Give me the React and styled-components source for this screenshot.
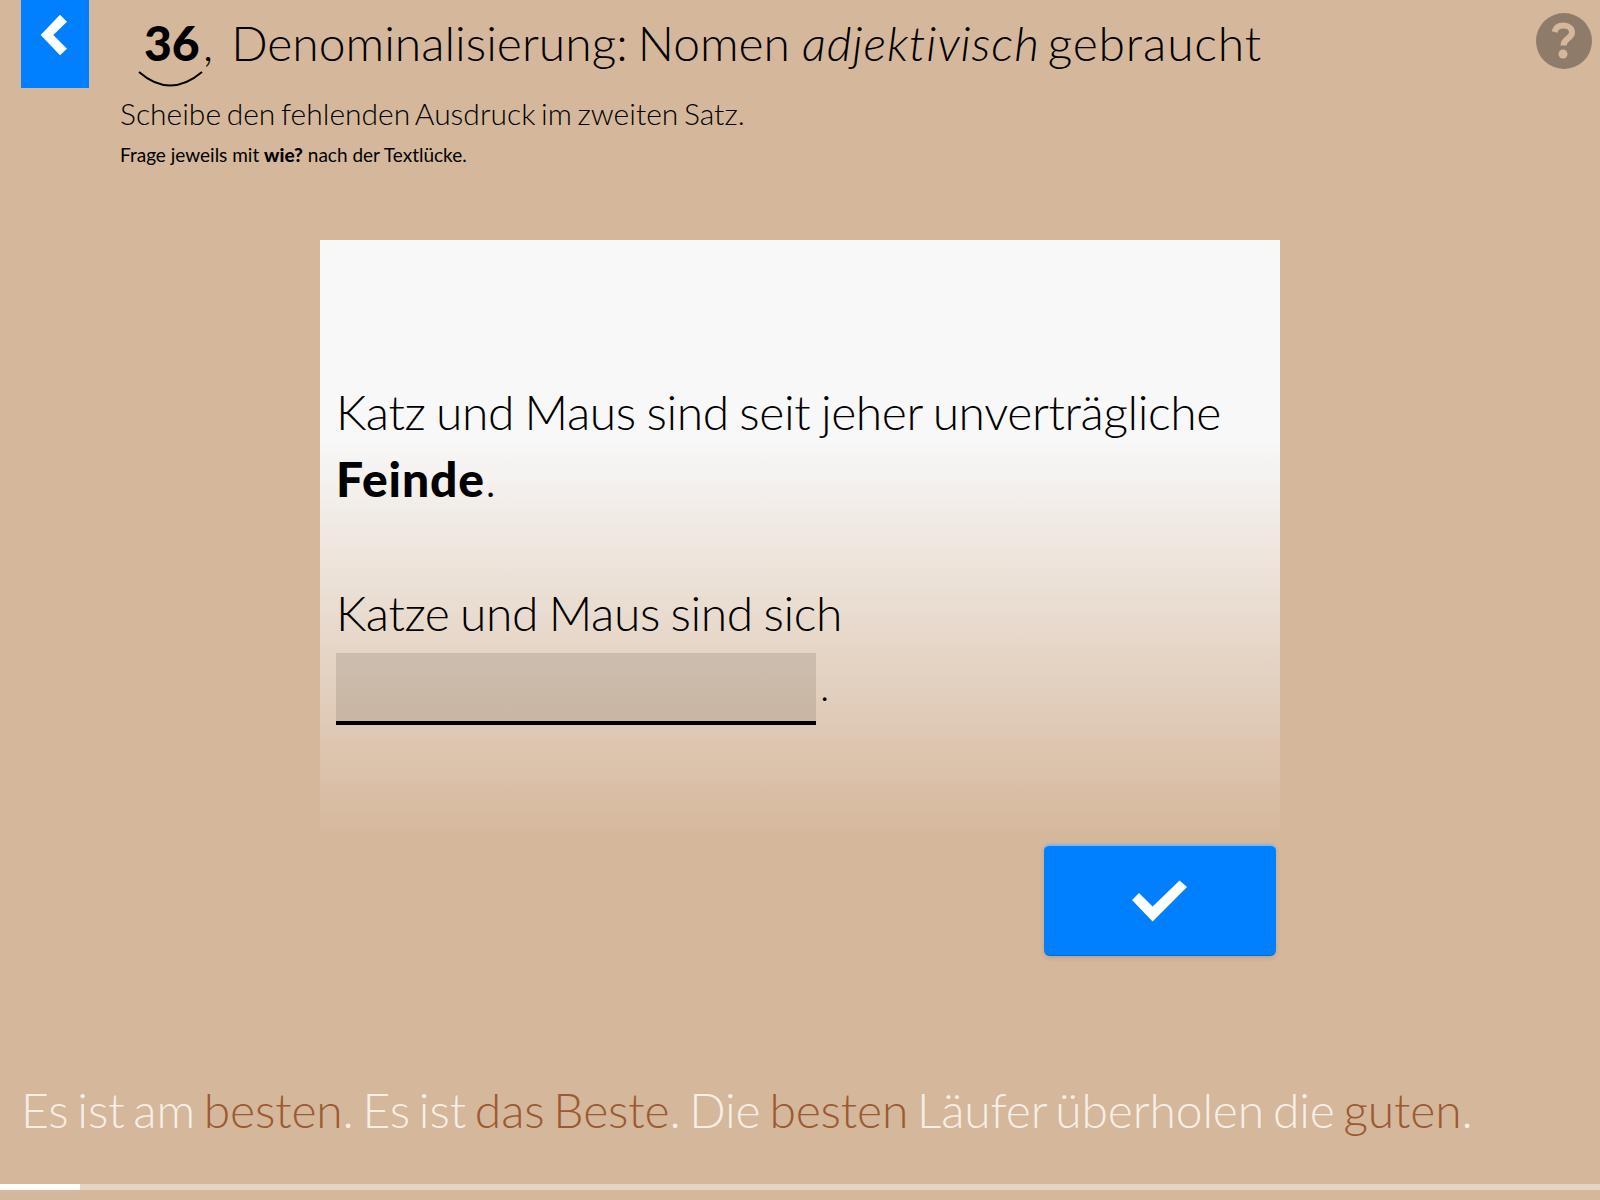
import React from "react";
import styled, { createGlobalStyle } from "styled-components";

const GlobalStyle = createGlobalStyle`
  html, body {
    margin: 0;
    padding: 0;
    background: #d5b79b;
  }
  body {
    font-family: "Lato", "Open Sans", sans-serif;
    font-weight: 300;
    color: #000;
  }
  strong {
    font-weight: 900;
  }
`;

const Page = styled.div`
  width: 1600px;
  height: 1200px;
  display: flex;
  flex-direction: column;
  overflow: hidden;
  background: #d5b79b;
`;

const Header = styled.header`
  height: 240px;
  flex: none;
  display: flex;
  align-items: flex-start;
  padding: 0 8px 0 21px;
  box-sizing: border-box;
`;

const BackButton = styled.button`
  width: 68px;
  height: 88px;
  flex: none;
  border: 0;
  padding: 0;
  background: #0080ff;
  display: block;
`;

const HeaderText = styled.div`
  flex: 1;
  padding: 12px 0 0 31px;
`;

const TitleRow = styled.h1`
  margin: 0;
  display: flex;
  align-items: baseline;
  font-size: 48px;
  line-height: 62px;
  font-weight: 300;
  word-spacing: -3px;
`;

const LessonNumber = styled.span`
  position: relative;
  margin-left: 24px;
  font-weight: 900;
`;

const Smile = styled.svg`
  position: absolute;
  left: -6px;
  top: 59px;
  width: 66px;
  height: 20px;
`;

const Comma = styled.span`
  margin: 0 18px 0 3px;
`;

const Em = styled.em`
  font-style: italic;
  letter-spacing: 0.9px;
  margin: 0 8px 0 12px;
`;

const LastWord = styled.span`
  letter-spacing: 0.8px;
`;

const Instruction = styled.p`
  margin: 19px 0 0;
  font-size: 30px;
  line-height: 40px;
  word-spacing: -2.5px;
`;

const Hint = styled.p`
  margin: 6px 0 0;
  font-size: 19px;
  line-height: 32px;
  font-weight: 400;
`;

const HelpIcon = styled.svg`
  flex: none;
  display: block;
  width: 56px;
  height: 56px;
  margin-top: 13px;
`;

const Card = styled.main`
  width: 960px;
  height: 600px;
  flex: none;
  margin-left: 320px;
  padding: 138px 16px 0;
  box-sizing: border-box;
  background: linear-gradient(
    to bottom,
    #f8f8f8 0%,
    #f8f8f8 33%,
    #d5b79b 100%
  );
  font-size: 48px;
  letter-spacing: -0.4px;
  word-spacing: -2px;
`;

const Sentence = styled.p`
  margin: 0 0 67px;
  line-height: 67px;
`;

const KeyWord = styled.strong`
  letter-spacing: 0.9px;
`;

const Blank = styled.span`
  display: inline-block;
  width: 480px;
  height: 72px;
  margin-top: 7px;
  box-sizing: border-box;
  vertical-align: bottom;
  border-bottom: 4px solid #000;
  background: rgba(140, 125, 110, 0.27);
`;

const Dot = styled.span`
  font-size: 40px;
  margin-left: 4px;
  vertical-align: 9px;
`;

const Actions = styled.div`
  display: flex;
  justify-content: flex-end;
  padding: 4px 324px 0 0;
`;

const CheckButton = styled.button`
  width: 232px;
  height: 112px;
  border: 0;
  border-radius: 6px;
  padding: 0;
  background: #0080ff;
  border-top: 2px solid #7ab8f7;
  border-bottom: 1px solid #0a68c8;
  box-sizing: border-box;
  box-shadow: 0 2px 5px rgba(0, 0, 0, 0.12);
  display: flex;
  align-items: center;
  justify-content: center;
`;

const Proverb = styled.p`
  margin: auto 0 0;
  padding-left: 21px;
  font-size: 48px;
  line-height: 60px;
  letter-spacing: -0.15px;
  word-spacing: -4px;
  color: #f7efe7;
  white-space: nowrap;
`;

const Brown = styled.span`
  color: #9b5a32;
`;

const Progress = styled.div`
  height: 6px;
  margin: 44px 0 10px;
  background: rgba(255, 255, 255, 0.4);
`;

const ProgressFill = styled.div`
  height: 100%;
  background: #fff;
`;

export default function App() {
  return (
    <Page>
      <GlobalStyle />
      <Header>
        <BackButton aria-label="Zurück">
          <svg width="68" height="88" viewBox="0 0 68 88">
            <path d="M19.7 35 39 14.7 46 21.7 32.3 35 46 48.7 39 55.3Z" fill="#fff" />
          </svg>
        </BackButton>
        <HeaderText>
          <TitleRow>
            <LessonNumber>
              36
              <Smile viewBox="0 0 66 20">
                <path d="M1 1Q32 28 64 1" fill="none" stroke="#000" strokeWidth="2" />
              </Smile>
            </LessonNumber>
            <Comma>,</Comma>
            Denominalisierung: Nomen<Em>adjektivisch</Em>
            <LastWord>gebraucht</LastWord>
          </TitleRow>
          <Instruction>Scheibe den fehlenden Ausdruck im zweiten Satz.</Instruction>
          <Hint>
            Frage jeweils mit <strong>wie?</strong> nach der Textlücke.
          </Hint>
        </HeaderText>
        <HelpIcon viewBox="0 0 56 56" aria-label="Hilfe">
          <circle cx="28" cy="28" r="28" fill="#8f7b69" />
          <path
            d="M18.5 19C19.5 14.5 23 12.5 27.5 12.5 32.5 12.5 36 15.5 36 19.5 36 25.5 27.5 25.5 27.5 32.5"
            fill="none"
            stroke="#d5b79b"
            strokeWidth="6"
          />
          <circle cx="27" cy="41" r="4.5" fill="#d5b79b" />
        </HelpIcon>
      </Header>

      <Card>
        <Sentence>
          Katz und Maus sind seit jeher unverträgliche <KeyWord>Feinde</KeyWord>.
        </Sentence>
        <Sentence>
          Katze und Maus sind sich <Blank />
          <Dot>.</Dot>
        </Sentence>
      </Card>

      <Actions>
        <CheckButton aria-label="Prüfen">
          <svg width="56" height="42" viewBox="0 0 56 42">
            <path d="M0 20 7 13 20.6 26.4 47.6 0.4 55 7 20.6 41.4Z" fill="#fff" />
          </svg>
        </CheckButton>
      </Actions>

      <Proverb>
        Es ist am <Brown>besten</Brown>. Es ist <Brown>das Beste</Brown>. Die{" "}
        <Brown>besten</Brown> Läufer überholen die <Brown>guten</Brown>.
      </Proverb>

      <Progress>
        <ProgressFill style={{ width: "5%" }} />
      </Progress>
    </Page>
  );
}
